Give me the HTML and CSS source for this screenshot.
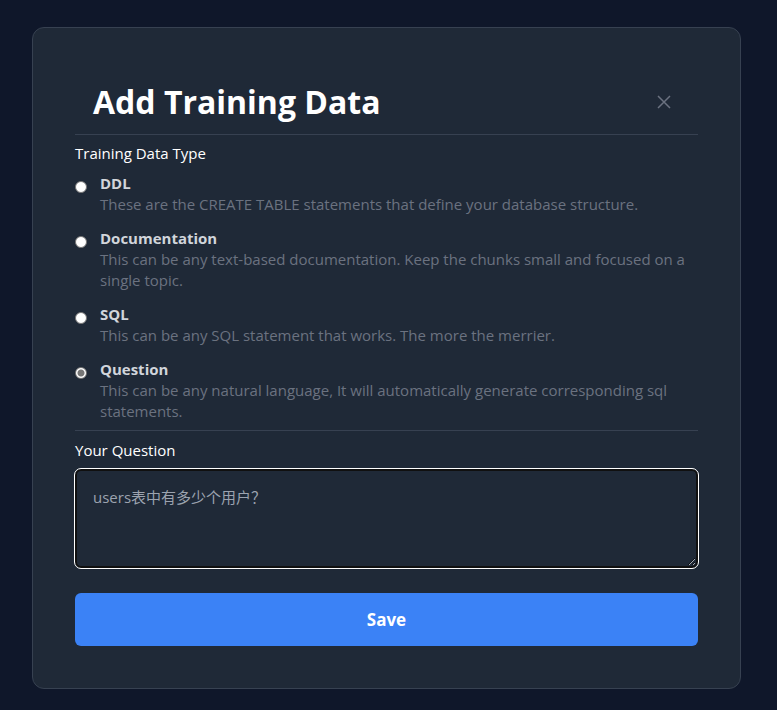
FILE: index.html
```html
<!DOCTYPE html>
<html lang="en">
<head>
<meta charset="utf-8">
<title>Add Training Data</title>
<link rel="stylesheet" href="styles.css">
</head>
<body>
<main class="card">
  <header class="card-header">
    <h1 class="title">Add Training Data</h1>
    <button class="close" type="button" aria-label="Close">
      <svg class="close-icon" viewBox="0 0 14 14" aria-hidden="true"><path d="M1 1l12 12M13 1L1 13"/></svg>
    </button>
  </header>
  <form>
    <fieldset class="types">
      <legend class="label">Training Data Type</legend>
      <div class="option">
        <input class="radio" type="radio" name="type" id="ddl">
        <label for="ddl"><span class="name">DDL</span><span class="hint">These are the CREATE TABLE statements that define your database structure.</span></label>
      </div>
      <div class="option">
        <input class="radio" type="radio" name="type" id="doc">
        <label for="doc"><span class="name">Documentation</span><span class="hint">This can be any text-based documentation. Keep the chunks small and focused on a single topic.</span></label>
      </div>
      <div class="option">
        <input class="radio" type="radio" name="type" id="sql">
        <label for="sql"><span class="name">SQL</span><span class="hint">This can be any SQL statement that works. The more the merrier.</span></label>
      </div>
      <div class="option">
        <input class="radio" type="radio" name="type" id="question" checked>
        <label for="question"><span class="name">Question</span><span class="hint">This can be any natural language, It will automatically generate corresponding sql statements.</span></label>
      </div>
    </fieldset>
    <label class="label question-label" for="text">Your Question</label>
    <textarea class="text" id="text" placeholder="users表中有多少个用户？"></textarea>
    <button class="save" type="submit">Save</button>
  </form>
</main>
</body>
</html>
```
FILE: styles.css
```css
* {
  box-sizing: border-box;
}

body {
  margin: 0;
  padding: 27px 36px 21px 32px;
  background: #0f172a;
  color: #fff;
  font: 15px/21px "Open Sans", "Noto Sans CJK SC", sans-serif;
}

.card {
  padding: 42px;
  background: #1f2937;
  border: 1px solid #374151;
  border-radius: 12px;
}

.card-header {
  display: flex;
  align-items: center;
  justify-content: space-between;
  height: 65px;
  padding: 0 24px 0 18px;
  border-bottom: 1px solid #374151;
}

.title {
  margin: 0;
  font-size: 32px;
  line-height: 40px;
}

.close {
  display: flex;
  padding: 3px;
  border: 0;
  background: none;
  color: #6b7280;
}

.close-icon {
  width: 14px;
  height: 14px;
  fill: none;
  stroke: currentColor;
  stroke-width: 1.5;
}

.types {
  min-width: 0;
  margin: 0;
  padding: 0 0 8px;
  border: 0;
  border-bottom: 1px solid #374151;
}

.label {
  display: block;
  padding: 7px 0 8px;
  line-height: 22px;
}

.question-label {
  padding: 8px 0;
}

.option {
  display: flex;
  gap: 13px;
}

.option + .option {
  margin-top: 12px;
}

.radio {
  appearance: none;
  flex: none;
  width: 12px;
  height: 12px;
  margin: 9px 0 0;
  border: 1px solid #767676;
  border-radius: 50%;
  background: #fff;
}

.radio:checked {
  background: radial-gradient(circle, #767676 3px, #fff 4px);
}

.name {
  display: block;
  color: #d1d5db;
  font-weight: 700;
  line-height: 22px;
}

.hint {
  display: block;
  color: #6b7280;
}

.text {
  display: block;
  width: 100%;
  height: 99px;
  padding: 16px;
  border: 2px solid #101010;
  border-radius: 6px;
  outline: 1px solid #fff;
  background: #1f2937;
  color: #fff;
  font: inherit;
  resize: vertical;
}

.text::placeholder {
  color: #9ca3af;
}

.save {
  display: block;
  width: 100%;
  margin-top: 25px;
  padding: 14px;
  border: 0;
  border-radius: 6px;
  background: #3b82f6;
  color: #fff;
  font: 700 17px/25px "Open Sans", sans-serif;
}
```
